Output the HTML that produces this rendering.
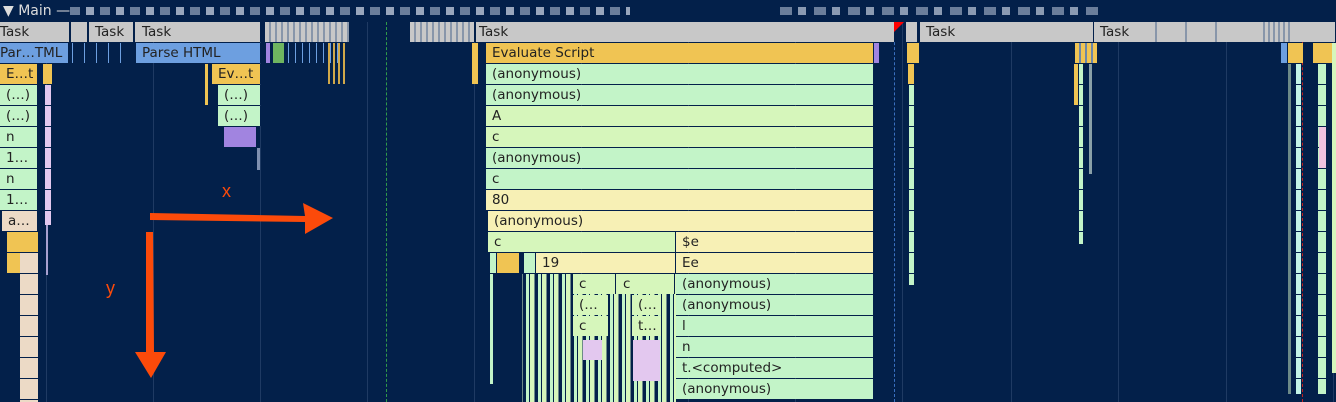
<!DOCTYPE html>
<html><head><meta charset="utf-8"><style>
body{margin:0;width:1336px;height:402px;overflow:hidden;background:#03204a;font-family:"DejaVu Sans","Liberation Sans",sans-serif;position:relative}
div{position:absolute;box-sizing:border-box}
.b{height:20px;font-size:13.5px;line-height:20px;color:#222;padding-left:6px;white-space:nowrap;overflow:hidden;border-right:1px solid #03204a}
.t{background:#c8c8c8}.p{background:#6d9fe0}.e{background:#f0c453}.g{background:#c3f4c8}.l{background:#d6f6bb}.y{background:#f7f0b5}.k{background:#ecdac6}.u{background:#a184e0}.pk{background:#e3c8ef}
.v{width:1px;top:22px;height:380px;background:#1f3a63}
</style></head><body>
<div style="left:3px;top:3px;font-size:14px;color:#ddd;line-height:16px">▼ Main —</div>
<div style="left:70px;top:7px;width:560px;height:8px;background:repeating-linear-gradient(90deg,#6b7e9b 0 10px,#03204a 10px 16px,#98a6bc 16px 24px,#03204a 24px 30px)"></div>
<div style="left:780px;top:7px;width:320px;height:8px;background:repeating-linear-gradient(90deg,#6b7e9b 0 12px,#03204a 12px 18px,#8a9ab2 18px 26px,#03204a 26px 34px)"></div>
<div class="v" style="left:46px"></div><div class="v" style="left:153px"></div><div class="v" style="left:260px"></div><div class="v" style="left:367px"></div><div class="v" style="left:474px"></div><div class="v" style="left:581px"></div><div class="v" style="left:688px"></div><div class="v" style="left:795px"></div><div class="v" style="left:902px"></div><div class="v" style="left:1011px"></div><div class="v" style="left:1118px"></div><div class="v" style="left:1226px"></div><div class="v" style="left:1333px"></div>
<div style="left:386px;top:22px;height:380px;border-left:1px dashed #2f9a4a"></div>
<div style="left:894px;top:22px;height:380px;border-left:1px dashed #3a70c0"></div>
<div style="left:1302px;top:22px;height:380px;border-left:1px dashed #c02020"></div>
<div class="b t" style="left:0;top:22px;width:70px;padding-left:0">Task</div>
<div class="b t" style="left:71px;top:22px;width:17px"></div>
<div class="b t" style="left:89px;top:22px;width:45px">Task</div>
<div class="b t" style="left:135px;top:22px;width:126px;padding-left:7px">Task</div>
<div class="b" style="left:265px;top:22px;width:85px;background:repeating-linear-gradient(90deg,#c8c8c8 0 4px,#8896aa 4px 6px)"></div>
<div class="b" style="left:410px;top:22px;width:65px;background:repeating-linear-gradient(90deg,#c8c8c8 0 4px,#8896aa 4px 6px)"></div>
<div class="b t" style="left:476px;top:22px;width:419px;padding-left:3px">Task</div>
<div style="left:894px;top:22px;width:0;height:0;border-left:10px solid red;border-bottom:10px solid transparent"></div>
<div class="b t" style="left:906px;top:22px;width:12px"></div>
<div class="b t" style="left:920px;top:22px;width:174px">Task</div>
<div class="b t" style="left:1094px;top:22px;width:242px">Task</div>
<div style="left:1155px;top:22px;width:2px;height:20px;background:#8896aa"></div><div style="left:1185px;top:22px;width:2px;height:20px;background:#8896aa"></div><div style="left:1215px;top:22px;width:2px;height:20px;background:#8896aa"></div><div style="left:1260px;top:22px;width:30px;height:20px;background:repeating-linear-gradient(90deg,#c8c8c8 0 3px,#8896aa 3px 5px)"></div>
<div class="b p" style="left:0;top:43px;width:69px;padding-left:0">Par…TML</div>
<div class="b p" style="left:136px;top:43px;width:125px">Parse HTML</div>
<div style="left:72px;top:43px;width:58px;height:20px;background:repeating-linear-gradient(90deg,#6d9fe0 0 1px,transparent 1px 12px)"></div>
<div class="u" style="left:266px;top:43px;width:4px;height:20px"></div>
<div style="left:273px;top:43px;width:11px;height:20px;background:#6fb560"></div>
<div style="left:288px;top:43px;width:60px;height:20px;background:repeating-linear-gradient(90deg,#6d9fe0 0 1px,transparent 1px 7px)"></div>
<div style="left:328px;top:43px;width:20px;height:41px;background:repeating-linear-gradient(90deg,#d0a84a 0 2px,transparent 2px 5px)"></div>
<div class="b e" style="left:486px;top:43px;width:388px">Evaluate Script</div>
<div class="u" style="left:874px;top:43px;width:5px;height:20px"></div>
<div class="e" style="left:472px;top:43px;width:6px;height:41px"></div>
<div class="e" style="left:907px;top:43px;width:12px;height:20px"></div>
<div class="e" style="left:1075px;top:43px;width:22px;height:20px;background:repeating-linear-gradient(90deg,#f0c453 0 4px,#6d87a8 4px 6px)"></div>
<div class="p" style="left:1281px;top:43px;width:6px;height:20px"></div>
<div class="e" style="left:1288px;top:43px;width:15px;height:20px"></div>
<div class="e" style="left:1313px;top:43px;width:19px;height:20px"></div>
<div class="b e" style="left:0;top:64px;width:38px">E…t</div>
<div class="e" style="left:43px;top:64px;width:9px;height:20px"></div>
<div class="b g" style="left:0;top:85px;width:38px">(…)</div>
<div class="b g" style="left:0;top:106px;width:38px">(…)</div>
<div class="b g" style="left:0;top:127px;width:38px">n</div>
<div class="b g" style="left:0;top:148px;width:38px">1…</div>
<div class="b g" style="left:0;top:169px;width:38px">n</div>
<div class="b g" style="left:0;top:190px;width:38px">1…</div>
<div class="b k" style="left:2px;top:211px;width:36px">a…</div>
<div class="e" style="left:7px;top:232px;width:31px;height:20px"></div>
<div class="e" style="left:7px;top:253px;width:13px;height:20px"></div>
<div style="left:20px;top:253px;width:18px;height:149px;background:repeating-linear-gradient(180deg,#ecdac6 0 20px,#03204a 20px 21px)"></div>
<div style="left:45px;top:85px;width:6px;height:140px;background:repeating-linear-gradient(180deg,#e3c8ef 0 20px,#03204a 20px 21px)"></div>
<div style="left:46px;top:225px;width:2px;height:50px;background:#a8a0d0"></div>
<div class="b e" style="left:212px;top:64px;width:49px">Ev…t</div>
<div class="e" style="left:205px;top:64px;width:3px;height:41px"></div>
<div class="b g" style="left:218px;top:85px;width:43px">(…)</div>
<div class="b g" style="left:218px;top:106px;width:43px">(…)</div>
<div class="u" style="left:224px;top:127px;width:32px;height:20px"></div>
<div style="left:257px;top:148px;width:3px;height:22px;background:#8090b0"></div>
<div class="b g" style="left:486px;top:64px;width:388px">(anonymous)</div>
<div class="b g" style="left:486px;top:85px;width:388px">(anonymous)</div>
<div class="b l" style="left:486px;top:106px;width:388px">A</div>
<div class="b l" style="left:486px;top:127px;width:388px">c</div>
<div class="b g" style="left:486px;top:148px;width:388px">(anonymous)</div>
<div class="b g" style="left:486px;top:169px;width:388px">c</div>
<div class="b y" style="left:486px;top:190px;width:388px">80</div>
<div class="b y" style="left:488px;top:211px;width:386px">(anonymous)</div>
<div class="b l" style="left:488px;top:232px;width:188px">c</div>
<div class="b y" style="left:676px;top:232px;width:198px">$e</div>
<div class="g" style="left:490px;top:253px;width:6px;height:20px"></div>
<div class="e" style="left:497px;top:253px;width:22px;height:20px"></div>
<div class="g" style="left:524px;top:253px;width:11px;height:20px"></div>
<div class="b y" style="left:536px;top:253px;width:140px">19</div>
<div class="b y" style="left:676px;top:253px;width:198px">Ee</div>
<div style="left:490px;top:274px;width:186px;height:128px;background:repeating-linear-gradient(90deg,#c3f4c8 0 3px,#03204a 3px 4px,#d6f6bb 4px 8px,#6d8a88 8px 9px,#03204a 9px 12px)"></div>
<div style="left:490px;top:274px;width:32px;height:128px;background:#03204a"></div>
<div style="left:490px;top:274px;width:3px;height:110px;background:#c3f4c8"></div>
<div class="b l" style="left:573px;top:274px;width:43px">c</div>
<div class="b l" style="left:617px;top:274px;width:58px">c</div>
<div class="b l" style="left:573px;top:295px;width:36px">(…</div>
<div class="b l" style="left:632px;top:295px;width:30px">(…</div>
<div class="b l" style="left:573px;top:316px;width:36px">c</div>
<div class="b l" style="left:632px;top:316px;width:30px">t…</div>
<div class="pk" style="left:583px;top:340px;width:19px;height:20px"></div>
<div class="pk" style="left:633px;top:340px;width:27px;height:41px"></div>
<div class="b g" style="left:676px;top:274px;width:198px">(anonymous)</div>
<div class="b g" style="left:676px;top:295px;width:198px">(anonymous)</div>
<div class="b g" style="left:676px;top:316px;width:198px">l</div>
<div class="b g" style="left:676px;top:337px;width:198px">n</div>
<div class="b g" style="left:676px;top:358px;width:198px">t.&lt;computed&gt;</div>
<div class="b g" style="left:676px;top:379px;width:198px">(anonymous)</div>
<div style="left:908px;top:64px;width:6px;height:20px;background:#f0c453"></div>
<div style="left:909px;top:85px;width:5px;height:200px;background:repeating-linear-gradient(180deg,#c3f4c8 0 20px,#03204a 20px 21px)"></div>
<div style="left:1074px;top:64px;width:4px;height:41px;background:#f0c453"></div>
<div style="left:1079px;top:64px;width:4px;height:180px;background:repeating-linear-gradient(180deg,#c3f4c8 0 20px,#03204a 20px 21px)"></div>
<div style="left:1089px;top:64px;width:3px;height:110px;background:#8aa0a8"></div>
<div style="left:1288px;top:64px;width:3px;height:330px;background:#6d8a88"></div>
<div style="left:1296px;top:64px;width:5px;height:330px;background:repeating-linear-gradient(180deg,#c3f4e8 0 20px,#03204a 20px 21px)"></div>
<div style="left:1318px;top:64px;width:8px;height:330px;background:repeating-linear-gradient(180deg,#c3f4c8 0 20px,#03204a 20px 21px)"></div>
<div style="left:1319px;top:127px;width:7px;height:41px;background:#f0c3e0"></div>
<div style="left:1332px;top:43px;width:4px;height:330px;background:#d6f6bb"></div>
<svg style="position:absolute;left:0;top:0" width="1336" height="402">
<polygon points="150,213 305,216 303,203 333,218 305,234 305,222 150,220" fill="#fc4a0a"/>
<polygon points="146,232 153,232 154,352 166,352 151,378 135,352 146,352" fill="#fc4a0a"/>
<text x="222" y="197" font-size="18" fill="#fc4a0a" font-family="Liberation Sans">x</text>
<text x="106" y="294" font-size="18" fill="#fc4a0a" font-family="Liberation Sans">y</text>
</svg>
</body></html>
